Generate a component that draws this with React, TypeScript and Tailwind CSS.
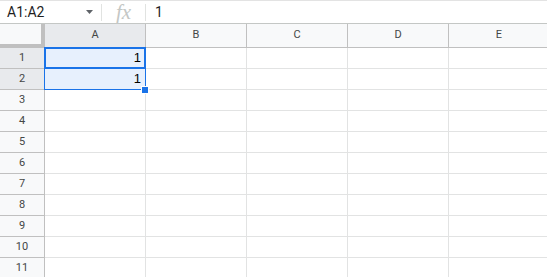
import React from "react";

const cols = ["A", "B", "C", "D", "E"];
const rows = Array.from({ length: 11 }, (_, i) => i + 1);
const values: Record<string, string> = { A1: "1", A2: "1" };

function FormulaBar() {
  return (
    <div className="flex h-[24px] items-center border-t border-b border-t-[#e3e3e3] border-b-[#c4c7c5] bg-white">
      <div className="flex w-[101px] items-center justify-between pl-[7px] pr-[6px]">
        <span className="text-[14px] text-[#1f1f1f] [font-family:Roboto,'Liberation_Sans',sans-serif]">A1:A2</span>
        <svg width="8" height="4" viewBox="0 0 8 4" className="mr-[1px]">
          <path d="M0 0h7L3.5 4z" fill="#5f6368" />
        </svg>
      </div>
      <div className="h-[17px] w-px bg-[#e1e3e1]" />
      <div className="flex w-[43px] items-center justify-center">
        <span className="text-[21px] italic leading-none text-[#c4c7c5] [font-family:'Liberation_Serif',serif]">fx</span>
      </div>
      <div className="h-[17px] w-px bg-[#e1e3e1]" />
      <span className="pl-[9px] text-[14px] text-[#1f1f1f] [font-family:Roboto,'Liberation_Sans',sans-serif]">1</span>
    </div>
  );
}

function Grid() {
  return (
    <div className="relative [font-family:Roboto,'Liberation_Sans',sans-serif]">
      <div className="flex h-[24px]">
        <div className="w-[45px] shrink-0 border-r-4 border-b-4 border-[#c0c0c0] bg-[#f8f9fa]" />
        {cols.map((c, i) => (
          <div
            key={c}
            className={`flex w-[101px] shrink-0 items-center justify-center border-r border-b border-[#c0c0c0] text-[11px] text-[#444746] ${
              i === 0 ? "bg-[#e8eaed]" : "bg-[#f8f9fa]"
            }`}
          >
            {c}
          </div>
        ))}
      </div>
      {rows.map((r) => (
        <div key={r} className="flex h-[21px]">
          <div
            className={`flex w-[45px] shrink-0 items-center justify-center border-r border-b border-[#c0c0c0] text-[11px] text-[#444746] ${
              r <= 2 ? "bg-[#e8eaed]" : "bg-[#f8f9fa]"
            }`}
          >
            {r}
          </div>
          {cols.map((c) => {
            const key = `${c}${r}`;
            const sel = c === "A" && r <= 2;
            return (
              <div
                key={key}
                className={`flex w-[101px] shrink-0 items-center justify-end border-r border-b border-[#e2e3e3] pr-[4px] text-[13px] text-black [font-family:'Liberation_Sans',Arial,sans-serif] ${
                  sel ? "bg-[#e7f0fd]" : "bg-white"
                }`}
              >
                {values[key] ?? ""}
              </div>
            );
          })}
        </div>
      ))}

      {/* selection range + active cell */}
      <div className="pointer-events-none absolute left-[44px] top-[23px] h-[43px] w-[102px] border border-[#1a73e8]" />
      <div className="pointer-events-none absolute left-[44px] top-[23px] h-[22px] w-[102px] border-2 border-[#1a73e8]" />
      <div className="pointer-events-none absolute left-[141px] top-[62px] box-content h-[6px] w-[6px] border border-white bg-[#1a73e8]" />
    </div>
  );
}

export default function App() {
  return (
    <div className="h-[277px] w-[547px] overflow-hidden bg-white">
      <FormulaBar />
      <Grid />
    </div>
  );
}
